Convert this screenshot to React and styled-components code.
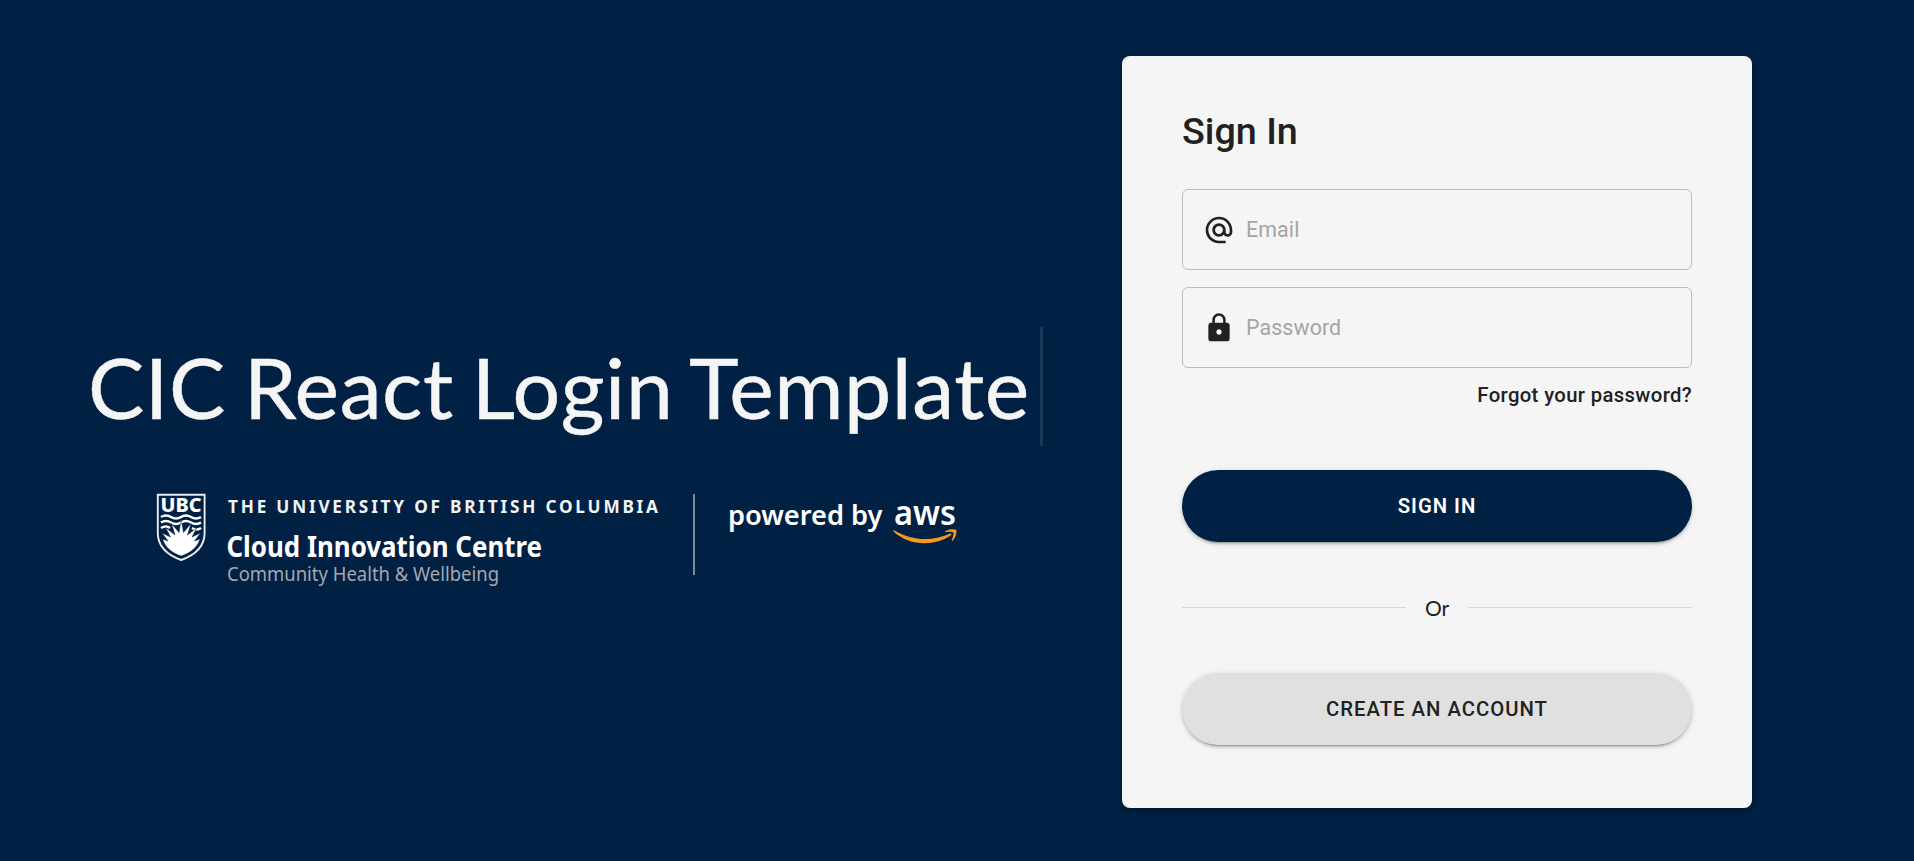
import React from "react";
import styled, { createGlobalStyle } from "styled-components";
import { MdAlternateEmail, MdLock } from "react-icons/md";

const GlobalStyle = createGlobalStyle`
  * { box-sizing: border-box; }
  body { margin: 0; background: #012144; font-family: Roboto, "Liberation Sans", sans-serif; }
`;

const Page = styled.main`
  display: flex;
  align-items: center;
  height: 861px;
  padding-top: 3px;
  overflow: hidden;
  background: #012144;
`;

const Brand = styled.section`
  flex: none;
  width: 1122px;
  padding: 53px 0 0 88px;
`;

const Title = styled.h1`
  display: inline-block;
  width: 955px;
  height: 119px;
  margin: 0;
  border-right: 3px solid #1d3856;
  color: #f5f5f5;
  font-family: Lato, sans-serif;
  font-size: 84.2px;
  font-weight: 400;
  letter-spacing: 0.6px;
  word-spacing: -4px;
  -webkit-text-stroke: 0.5px #f5f5f5;
  line-height: 119px;
  white-space: nowrap;
`;

const Logos = styled.div`
  display: flex;
  align-items: flex-start;
  margin-top: 48px;
  padding-left: 69px;
  height: 96px;
`;

const Logo = styled.svg`
  display: block;
  flex: none;
  overflow: visible;
  font-family: "Noto Sans", "Open Sans", sans-serif;
`;

const LogoDivider = styled.div`
  width: 2px;
  height: 81px;
  margin: 0 35px 0 34px;
  background: #7a8a9c;
`;

const Card = styled.section`
  width: 630px;
  height: 752px;
  padding: 49px 60px 0;
  border-radius: 8px;
  background: #f5f5f5;
  color: #212121;
  box-shadow: 0 3px 7px rgba(0, 0, 0, 0.2), 0 2px 3px rgba(0, 0, 0, 0.14);
`;

const Heading = styled.h2`
  margin: 0 0 32px;
  font-size: 37.7px;
  font-weight: 500;
  line-height: 52px;
`;

const Field = styled.label`
  display: flex;
  align-items: center;
  gap: 11px;
  height: 81px;
  margin-bottom: 17px;
  padding: 0 20px;
  border: 1px solid #bdbdbd;
  border-radius: 6px;

  svg { flex: none; width: 32px; height: 32px; }
`;

const Input = styled.input`
  flex: 1;
  min-width: 0;
  padding: 0;
  border: 0;
  outline: 0;
  background: transparent;
  font: 400 21.4px Roboto, sans-serif;
  letter-spacing: 0.1px;

  &::placeholder { color: #a4a4a4; opacity: 1; }
`;

const ForgotLink = styled.div`
  margin-top: -3px;
  font-size: 20.3px;
  font-weight: 500;
  letter-spacing: 0.36px;
  line-height: 26px;
  text-align: right;
`;

const PillButton = styled.button`
  display: block;
  width: 100%;
  height: 72px;
  margin: ${(p) => p.$top}px 0 0;
  padding: 0;
  border: 0;
  border-radius: 36px;
  background: ${(p) => (p.$primary ? "#012144" : "#e0e0e0")};
  color: ${(p) => (p.$primary ? "#fff" : "#212121")};
  font: ${(p) => (p.$primary ? 600 : 500)} 20.3px Roboto, sans-serif;
  letter-spacing: 1px;
  box-shadow: 0 4px 1px -3px rgba(0, 0, 0, 0.2), 0 2.5px 2.5px rgba(0, 0, 0, 0.14),
    0 1px 6px rgba(0, 0, 0, 0.12);
`;

const OrDivider = styled.div`
  display: flex;
  align-items: center;
  height: 26px;
  margin-top: 52px;
  font: 400 21px/26px Lato, sans-serif;

  &::before, &::after { content: ""; flex: 1; height: 1px; background: #d7d7d7; }
  span { width: 62px; text-align: center; padding-top: 2px; }
`;

const UbcLogo = () => (
  <Logo width="502" height="96" viewBox="0 0 502 96">
    <path d="M.8.8H47.6V39C47.6 52 38 61 24.2 66 10.400 61 .8 52 .8 39Z" fill="none" stroke="#e9edf1" strokeWidth="1.9" />
    <text x="3.500" y="18.300" fontSize="19.300" fontWeight="800" fill="#fff" textLength="41" lengthAdjust="spacingAndGlyphs">UBC</text>
    <g fill="none" stroke="#fff" strokeWidth="2.600">
      <path d="M4 23q5-3 10 0t10 0 10 0 10 0" />
      <path d="M4 28.500q5-3 10 0t10 0 10 0 10 0" />
      <path d="M4 34q5-3 9 0M35 34q5 3 9 0" />
    </g>
    <path d="M24.200 62C15 59 8 53.500 5.500 45L11 47 5 39 13.500 43 8.500 33.500 18 41 14.500 29.500 22 38.500 24.200 25.500 26.500 38.500 34 29.500 30.500 41 40 33.500 35 43 43.500 39 37.500 47 43 45C40.500 53.500 33.500 59 24.200 62Z" fill="#fff" stroke="#012144" strokeWidth=".5" />
    <text x="71" y="18.500" fontSize="17.200" fontWeight="700" fill="#f1f3f5" textLength="430" lengthAdjust="spacing">THE UNIVERSITY OF BRITISH COLUMBIA</text>
    <text x="69.500" y="63" fontSize="28" fontWeight="700" fill="#fff" textLength="315.500" lengthAdjust="spacingAndGlyphs">Cloud Innovation Centre</text>
    <text x="70" y="87" fontSize="19" fill="#a4a8ad" textLength="272" lengthAdjust="spacingAndGlyphs">Community Health &amp; Wellbeing</text>
  </Logo>
);

const AwsLogo = () => (
  <Logo width="230" height="60" viewBox="0 0 230 60">
    <text x="-2" y="31" fontSize="27.800" fontWeight="600" fill="#fff" textLength="154.500" lengthAdjust="spacingAndGlyphs">powered by</text>
    <text x="164" y="31" fontSize="34.500" fontWeight="600" fill="#fff" textLength="62" lengthAdjust="spacingAndGlyphs">aws</text>
    <path d="M163.300 37.200C162.700 36.500 163.400 36 164.300 36.500C183 47.300 202 47.200 220 39.700C221.500 39.100 222 40.600 221 41.300C205 52.500 179 52.500 163.300 37.200Z" fill="#f7981d" />
    <path d="M215.500 37.100C219 34.600 225.500 35 226.300 36.100C227.100 37.500 226 43.500 222.800 46.600C222.200 47.200 221.400 46.900 221.700 46.100C222.500 43.900 224.200 39.800 223.300 38.700C222.300 37.500 218.600 37.900 216.100 38.100C215.300 38.200 214.900 37.600 215.500 37.100Z" fill="#f7981d" />
  </Logo>
);

export default function App() {
  return (
    <>
      <GlobalStyle />
      <Page>
        <Brand>
          <Title>CIC React Login Template</Title>
          <Logos>
            <UbcLogo />
            <LogoDivider />
            <AwsLogo />
          </Logos>
        </Brand>
        <Card>
          <Heading>Sign In</Heading>
          <Field>
            <MdAlternateEmail />
            <Input type="email" placeholder="Email" />
          </Field>
          <Field>
            <MdLock />
            <Input type="password" placeholder="Password" />
          </Field>
          <ForgotLink>Forgot your password?</ForgotLink>
          <PillButton $primary $top={62}>SIGN IN</PillButton>
          <OrDivider><span>Or</span></OrDivider>
          <PillButton $top={53}>CREATE AN ACCOUNT</PillButton>
        </Card>
      </Page>
    </>
  );
}
